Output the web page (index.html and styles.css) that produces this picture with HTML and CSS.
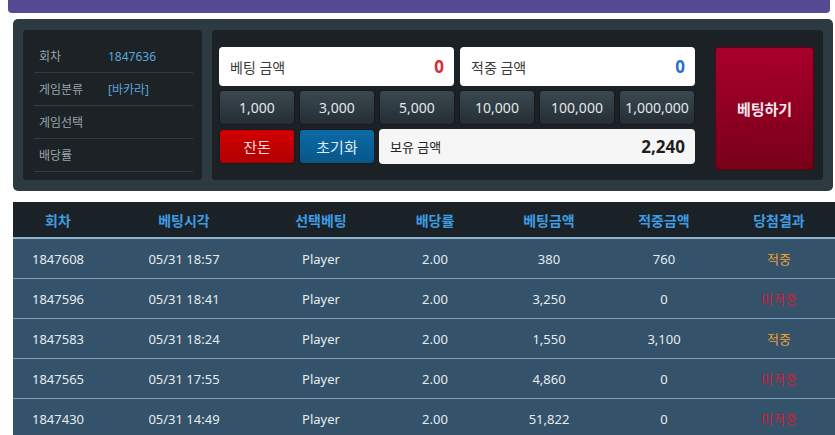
FILE: index.html
```html
<!DOCTYPE html>
<html lang="ko">
<head>
    <meta charset="UTF-8">
    <title>베팅</title>
    <link rel="stylesheet" href="styles.css">
</head>
<body>
    <div class="topbar"></div>

    <section class="bet-panel">
        <div class="info">
            <div class="info-row"><span class="info-label">회차</span><span class="info-value">1847636</span></div>
            <div class="info-row"><span class="info-label">게임분류</span><span class="info-value">[바카라]</span></div>
            <div class="info-row"><span class="info-label">게임선택</span><span class="info-value"></span></div>
            <div class="info-row"><span class="info-label">배당률</span><span class="info-value"></span></div>
        </div>

        <div class="board">
            <div class="board-grid">
                <div class="amount-row">
                    <div class="amount-box"><span>베팅 금액</span><strong class="red">0</strong></div>
                    <div class="amount-box"><span>적중 금액</span><strong class="blue">0</strong></div>
                </div>
                <div class="chip-row">
                    <button class="chip">1,000</button>
                    <button class="chip">3,000</button>
                    <button class="chip">5,000</button>
                    <button class="chip">10,000</button>
                    <button class="chip">100,000</button>
                    <button class="chip">1,000,000</button>
                </div>
                <div class="action-row">
                    <button class="chip btn-change">잔돈</button>
                    <button class="chip btn-reset">초기화</button>
                    <div class="amount-box balance"><span>보유 금액</span><strong>2,240</strong></div>
                </div>
            </div>
            <button class="bet-btn">베팅하기</button>
        </div>
    </section>

    <table class="history">
        <thead>
            <tr>
                <th class="c1">회차</th>
                <th class="c2">베팅시각</th>
                <th class="c3">선택베팅</th>
                <th class="c4">배당률</th>
                <th class="c5">베팅금액</th>
                <th class="c6">적중금액</th>
                <th class="c7">당첨결과</th>
            </tr>
        </thead>
        <tbody>
            <tr><td>1847608</td><td>05/31 18:57</td><td>Player</td><td>2.00</td><td>380</td><td>760</td><td class="win">적중</td></tr>
            <tr><td>1847596</td><td>05/31 18:41</td><td>Player</td><td>2.00</td><td>3,250</td><td>0</td><td class="lose">미적중</td></tr>
            <tr><td>1847583</td><td>05/31 18:24</td><td>Player</td><td>2.00</td><td>1,550</td><td>3,100</td><td class="win">적중</td></tr>
            <tr><td>1847565</td><td>05/31 17:55</td><td>Player</td><td>2.00</td><td>4,860</td><td>0</td><td class="lose">미적중</td></tr>
            <tr><td>1847430</td><td>05/31 14:49</td><td>Player</td><td>2.00</td><td>51,822</td><td>0</td><td class="lose">미적중</td></tr>
        </tbody>
    </table>
</body>
</html>
```

FILE: styles.css
```css
body {
    font-family: "Noto Sans", "Noto Sans CJK KR", sans-serif;
    background-color: #ffffff;
    margin: 0;
    padding: 0;
    overflow: hidden;
}

.topbar {
    height: 13px;
    margin: 0 5px 0 8px;
    background-color: #574a94;
    border-radius: 0 0 4px 4px;
}

.bet-panel {
    display: flex;
    gap: 10px;
    height: 172px;
    box-sizing: border-box;
    margin: 6px 2px 0 13px;
    padding: 11px 10px;
    background-color: #2d3a40;
    border-radius: 5px;
}

.info {
    width: 179px;
    box-sizing: border-box;
    padding: 10px 9px 0 11px;
    background-color: #1c2226;
    border-radius: 4px;
}

.info-row {
    display: flex;
    align-items: center;
    height: 33px;
    box-sizing: border-box;
    padding-left: 5px;
    border-bottom: 1px solid #343c42;
    font-size: 12px;
}

.info-label {
    width: 69px;
    color: #9aa4aa;
}

.info-value {
    color: #5aa6d6;
}

.board {
    flex: 1;
    display: flex;
    gap: 20px;
    padding: 17px 9px 0 7px;
    background-color: #1b2125;
    border-radius: 4px;
}

.board-grid {
    width: 476px;
    display: flex;
    flex-direction: column;
    gap: 4px;
}

.amount-row {
    display: flex;
    gap: 6px;
}

.amount-box {
    flex: 1;
    display: flex;
    align-items: center;
    justify-content: space-between;
    height: 39px;
    box-sizing: border-box;
    padding: 0 10px 0 11px;
    background-color: #ffffff;
    border-radius: 4px;
    font-size: 14px;
    color: #3a3a3a;
}

.amount-box strong {
    font-size: 17px;
    font-weight: 700;
}

.red {
    color: #dc2a30;
}

.blue {
    color: #2a70cf;
}

.chip-row,
.action-row {
    display: flex;
    gap: 4px;
}

.chip {
    width: 76px;
    height: 35px;
    flex-shrink: 0;
    padding: 0;
    font-family: inherit;
    font-size: 14px;
    color: #e2e6ea;
    background: linear-gradient(#3b4850, #242e34);
    border: 1px solid #151a1d;
    border-radius: 4px;
}

.btn-change {
    background: linear-gradient(#d20000, #b00000);
    color: #f6dede;
    font-size: 15px;
}

.btn-reset {
    background: linear-gradient(#0d6aa6, #07578a);
    color: #dfe9f2;
    font-size: 15px;
}

.amount-box.balance {
    height: 35px;
    margin-left: 0;
    background-color: #f6f6f6;
    font-size: 13px;
    color: #222;
}

.amount-box.balance strong {
    color: #1e1e1e;
}

.bet-btn {
    width: 99px;
    height: 123px;
    padding: 0;
    font-family: inherit;
    font-size: 15px;
    font-weight: 700;
    color: #f4e8ec;
    background: linear-gradient(#a8002c, #780018);
    border: 1px solid #5c0012;
    border-radius: 3px;
}

.history {
    width: 822px;
    margin: 11px 0 0 13px;
    border-collapse: collapse;
    table-layout: fixed;
    font-size: 13px;
}

.history th {
    height: 35px;
    padding: 0;
    background-color: #1b2227;
    color: #3d9ce2;
    font-weight: 700;
    font-size: 14px;
    border-bottom: 2px solid #8fb4cf;
}

.history td {
    height: 39px;
    padding: 0;
    text-align: center;
    color: #e6ecf0;
    background-color: #34526a;
    border-bottom: 1px solid #7ea3c0;
}

.c1 { width: 90px; }
.c2 { width: 162px; }
.c3 { width: 112px; }
.c4 { width: 116px; }
.c5 { width: 112px; }
.c6 { width: 118px; }
.c7 { width: 112px; }

.history td.win {
    color: #eaa235;
}

.history td.lose {
    color: #cc1f3a;
}
```
